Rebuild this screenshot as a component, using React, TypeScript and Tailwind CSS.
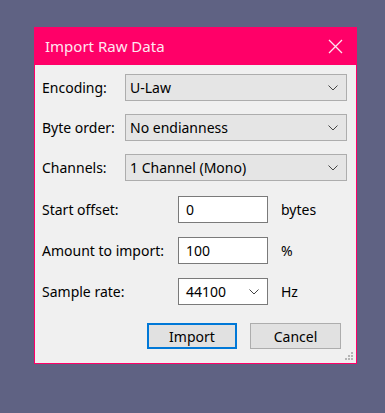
import React from 'react';

function Chevron({ className = '' }: { className?: string }) {
  return (
    <svg width="10" height="6" viewBox="0 0 10 6" className={className}>
      <path d="M0.5 0.5 L5 5 L9.5 0.5" fill="none" stroke="#444" strokeWidth="1" />
    </svg>
  );
}

function SelectRow({ label, value }: { label: string; value: string }) {
  return (
    <div className="flex items-center h-[27px]">
      <span className="w-[83px] shrink-0">{label}</span>
      <div className="w-[222px] h-[27px] flex items-center justify-between bg-[#e5e5e5] border border-[#adadad] pl-[4px] pr-[8px]">
        <span>{value}</span>
        <Chevron />
      </div>
    </div>
  );
}

function InputRow({ label, value, unit, dropdown }: { label: string; value: string; unit: string; dropdown?: boolean }) {
  return (
    <div className="flex items-center h-[27px]">
      <span className="w-[136px] shrink-0">{label}</span>
      <div className="w-[90px] h-[27px] flex items-center justify-between bg-white border border-[#7a7a7a] pl-[7px] pr-[8px]">
        <span>{value}</span>
        {dropdown && <Chevron />}
      </div>
      <span className="ml-[13px]">{unit}</span>
    </div>
  );
}

export default function App() {
  return (
    <div className="w-[385px] h-[413px] bg-[#5f6283] pt-[27px] pl-[34px] font-['Noto_Sans',sans-serif] text-[14px] text-black">
      <div className="w-[323px] h-[337px] flex flex-col bg-[#f0f0f0] border border-t-0 border-[#ff0068]">
        <div className="h-[38px] -mx-px bg-[#ff0068] flex items-center justify-between pl-[11px] pr-[14px] text-[15px] text-[#ffe6f0]">
          <span>Import Raw Data</span>
          <svg width="15" height="15" viewBox="0 0 15 15">
            <path d="M1 1 L14 14 M14 1 L1 14" stroke="#ffe6f0" strokeWidth="1.3" />
          </svg>
        </div>
        <div className="flex flex-col pl-[7px] pt-[9px] gap-[13px]">
          <SelectRow label="Encoding:" value="U-Law" />
          <SelectRow label="Byte order:" value="No endianness" />
          <SelectRow label="Channels:" value="1 Channel (Mono)" />
          <div className="flex flex-col gap-[14px] mt-[2px]">
            <InputRow label="Start offset:" value="0" unit="bytes" />
            <InputRow label="Amount to import:" value="100" unit="%" />
            <InputRow label="Sample rate:" value="44100" unit="Hz" dropdown />
          </div>
        </div>
        <div className="flex justify-end gap-[13px] pr-[15px] mt-[18px]">
          <button className="w-[90px] h-[26px] bg-[#e1e1e1] border-2 border-[#0078d7]">Import</button>
          <button className="w-[91px] h-[26px] bg-[#e1e1e1] border border-[#adadad]">Cancel</button>
        </div>
        <div className="flex justify-end pr-[3px] mt-auto pb-[3px]">
          <svg width="8" height="8" viewBox="0 0 8 8">
            <g fill="#b5b5b5">
              <rect x="6" y="0" width="2" height="2" />
              <rect x="3" y="3" width="2" height="2" />
              <rect x="6" y="3" width="2" height="2" />
              <rect x="0" y="6" width="2" height="2" />
              <rect x="3" y="6" width="2" height="2" />
              <rect x="6" y="6" width="2" height="2" />
            </g>
          </svg>
        </div>
      </div>
    </div>
  );
}
